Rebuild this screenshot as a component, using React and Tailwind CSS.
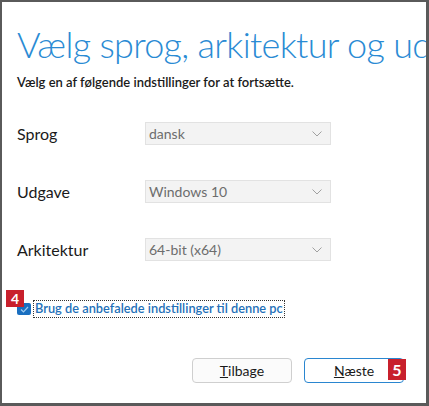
export default function App() {
  const font = { fontFamily: 'Lato, "Open Sans", sans-serif' };
  const Chevron = () => (
    <svg width="10" height="6" viewBox="0 0 10 6" className="shrink-0">
      <path d="M0.5 0.5 L5 5 L9.5 0.5" fill="none" stroke="#a0a0a0" strokeWidth="1" />
    </svg>
  );
  const Row = ({ label, value }) => (
    <div className="flex items-center h-[23px]">
      <div className="w-[128px] text-[16px] text-[#1a1a1a]">{label}</div>
      <div className="w-[186px] h-[23px] bg-[#f3f3f3] border border-[#e2e2e2] flex items-center justify-between pl-[3px] pr-[8px] text-[14px] text-[#6d6d6d]">
        <span>{value}</span>
        <Chevron />
      </div>
    </div>
  );
  return (
    <div className="w-[429px] h-[406px] relative overflow-hidden bg-white border-l-2 border-t-2 border-r-[3px] border-b-[3px] border-[#5a5a5a]" style={font}>
      <div className="flex flex-col pl-[15px]">
        <div className="mt-[18px] text-[36px] leading-[48px] font-light text-[#2a8bd4] whitespace-nowrap tracking-[-0.7px]">
          Vælg sprog, arkitektur og udgave
        </div>
        <div className="mt-[6px] text-[13px] leading-[16px] font-semibold text-[#1a1a1a] whitespace-nowrap">
          Vælg en af følgende indstillinger for at fortsætte.
        </div>
        <div className="mt-[32px] flex flex-col gap-[35px]">
          <Row label="Sprog" value="dansk" />
          <Row label="Udgave" value="Windows 10" />
          <Row label="Arkitektur" value="64-bit (x64)" />
        </div>
        <div className="mt-[39px] flex items-center">
          <div className="w-[14px] h-[12px] bg-[#1a6fc0] rounded-[2px] flex items-center justify-center">
            <svg width="9" height="7" viewBox="0 0 9 7">
              <path d="M1 3.5 L3.5 6 L8 1" fill="none" stroke="#9ecbf0" strokeWidth="1.2" />
            </svg>
          </div>
          <div className="ml-[2px] border border-dotted border-[#333] px-[1px] h-[18px] flex items-center text-[12.8px] font-semibold text-[#2470b8] whitespace-nowrap">
            Brug de anbefalede indstillinger til denne pc
          </div>
        </div>
        <div className="mt-[40px] flex justify-end gap-[12px] pr-[22px]">
          <div className="w-[100px] h-[25px] rounded-[4px] border border-[#cfcfcf] bg-[#fbfbfb] flex items-center justify-center text-[14px] text-[#1a1a1a]">
            <span><span className="underline">T</span>ilbage</span>
          </div>
          <div className="w-[100px] h-[25px] rounded-[4px] border border-[#2a86d0] bg-white flex items-center justify-center text-[14px] text-[#1a1a1a]">
            <span><span className="underline">N</span>æste</span>
          </div>
        </div>
      </div>
      <div className="absolute left-[4px] top-[288px] w-[18px] h-[17px] bg-[#c8202c] text-white text-[14px] font-bold flex items-center justify-center leading-none">4</div>
      <div className="absolute left-[386px] top-[357px] w-[18px] h-[21px] bg-[#c8202c] text-white text-[16px] font-bold flex items-center justify-center leading-none">5</div>
    </div>
  );
}
